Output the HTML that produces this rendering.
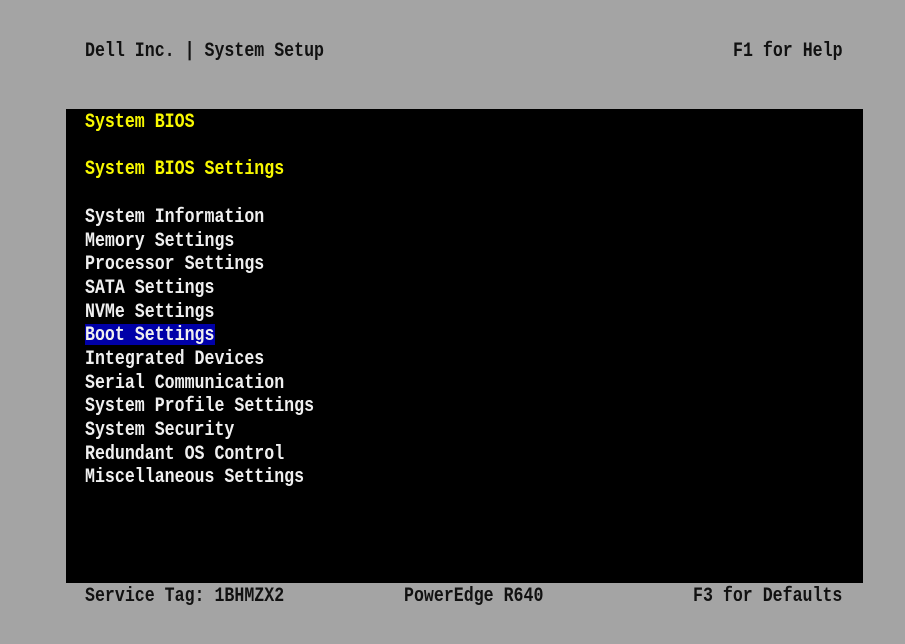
<!DOCTYPE html>
<html><head><style>
html,body{margin:0;padding:0}
body{width:905px;height:644px;background:#a4a4a4;position:relative;overflow:hidden;font-family:"Liberation Mono",monospace;font-size:16.6px;font-weight:bold}
.t{position:absolute;line-height:24px;height:24px;white-space:pre;letter-spacing:0;transform:translateY(1px) scaleY(1.2);transform-origin:50% 50%}
.k{color:#111}
.y{color:#f8f800}
.w{color:#f0f0f0}
#box{position:absolute;left:66px;top:109px;width:797px;height:474px;background:#000}
.hl{background:#0000a8}
</style></head><body>
<div class="t k" style="left:85px;top:38px">Dell Inc. | System Setup</div>
<div class="t k" style="left:733px;top:38px">F1 for Help</div>
<div id="box"></div>
<div class="t y" style="left:85px;top:109px">System BIOS</div>
<div class="t y" style="left:85px;top:156px">System BIOS Settings</div>
<div class="t w" style="left:85px;top:204px">System Information</div>
<div class="t w" style="left:85px;top:228px">Memory Settings</div>
<div class="t w" style="left:85px;top:251px">Processor Settings</div>
<div class="t w" style="left:85px;top:275px">SATA Settings</div>
<div class="t w" style="left:85px;top:299px">NVMe Settings</div>
<div style="position:absolute;left:85px;top:324px;width:130px;height:21px;background:#0000a8"></div>
<div class="t w" style="left:85px;top:322px">Boot Settings</div>
<div class="t w" style="left:85px;top:346px">Integrated Devices</div>
<div class="t w" style="left:85px;top:370px">Serial Communication</div>
<div class="t w" style="left:85px;top:393px">System Profile Settings</div>
<div class="t w" style="left:85px;top:417px">System Security</div>
<div class="t w" style="left:85px;top:441px">Redundant OS Control</div>
<div class="t w" style="left:85px;top:464px">Miscellaneous Settings</div>
<div class="t k" style="left:85px;top:583px">Service Tag: 1BHMZX2</div>
<div class="t k" style="left:404px;top:583px">PowerEdge R640</div>
<div class="t k" style="left:693px;top:583px">F3 for Defaults</div>
</body></html>
